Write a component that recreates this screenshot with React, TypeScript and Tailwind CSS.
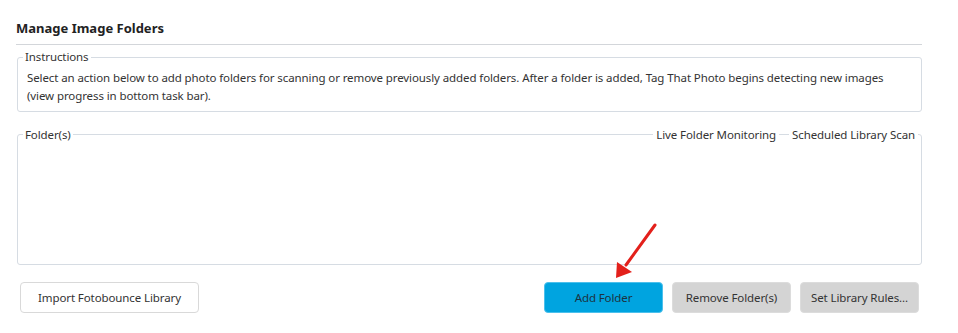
import React from 'react';

const btnBase =
  'h-[31px] rounded-[4px] border text-[11.5px] leading-none flex items-center justify-center';

export default function App() {
  return (
    <div className="relative w-[958px] h-[333px] bg-white pl-4 pt-[18px] text-[11.5px] tracking-[-0.1px] text-[#333] font-['Segoe_UI','Noto_Sans',sans-serif]">
      <div className="w-[906px]">
        <h1 className="h-[20px] leading-[20px] text-[13px] font-bold tracking-normal text-[#222]">Manage Image Folders</h1>
        <div className="mt-[6px] border-b border-[#d3d6da]" />

        {/* Instructions */}
        <div className="relative ml-px mt-[12px] h-[55px] rounded-[3px] border border-[#d6dce3] px-[9px] pt-[11px]">
          <span className="absolute -top-[10px] left-[5px] bg-white px-[2px] leading-[18px]">Instructions</span>
          <p className="leading-[18px] whitespace-nowrap">
            Select an action below to add photo folders for scanning or remove previously added folders. After a folder is
            added, Tag That Photo begins detecting new images
            <br />
            (view progress in bottom task bar).
          </p>
        </div>

        {/* Folder list */}
        <div className="relative ml-px mt-[22px] h-[131px] rounded-[3px] border border-[#d6dce3]">
          <div className="absolute -top-[9px] left-[5px] right-[3px] flex justify-between leading-[18px]">
            <span className="bg-white px-[2px]">Folder(s)</span>
            <div className="flex gap-[10px]">
              <span className="bg-white px-[3px]">Live Folder Monitoring</span>
              <span className="bg-white px-[3px]">Scheduled Library Scan</span>
            </div>
          </div>
        </div>

        {/* Buttons */}
        <div className="ml-px mt-[17px] flex items-center pl-[3px] pr-[3px]">
          <button className={`${btnBase} w-[179px] border-[#d9d9d9] bg-white text-[#333]`}>Import Fotobounce Library</button>
          <div className="ml-auto flex gap-[9px]">
            <button className={`${btnBase} w-[119px] border-[#4cc0ec] bg-[#00a4e0] text-[#1d3341]`}>Add Folder</button>
            <button className={`${btnBase} w-[119px] border-[#dcdcdc] bg-[#d4d4d4] text-[#333]`}>Remove Folder(s)</button>
            <button className={`${btnBase} w-[119px] border-[#dcdcdc] bg-[#d4d4d4] text-[#333]`}>Set Library Rules...</button>
          </div>
        </div>
      </div>

      {/* red annotation arrow */}
      <svg className="pointer-events-none absolute left-0 top-0" width="958" height="333">
        <line x1="655" y1="225" x2="626" y2="265" stroke="#e3201b" strokeWidth="3" strokeLinecap="round" />
        <polygon points="616,278 617,262 632,272" fill="#e3201b" />
      </svg>
    </div>
  );
}
